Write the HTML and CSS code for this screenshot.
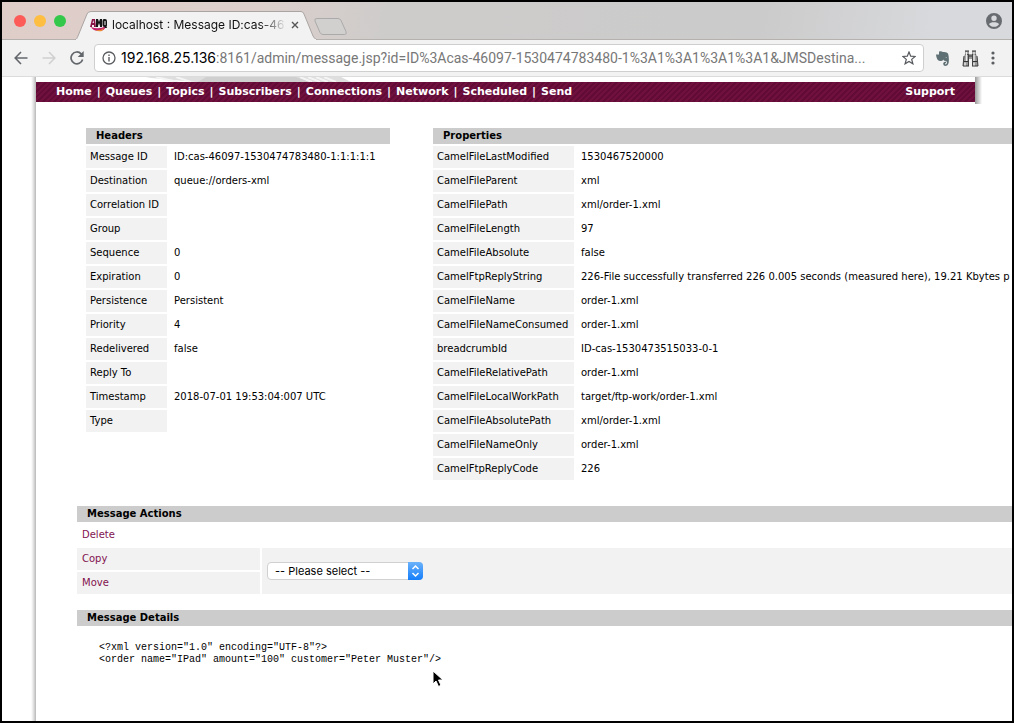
FILE: index.html
```html
<!DOCTYPE html>
<html lang="en">
<head>
<meta charset="utf-8">
<title>localhost : Message ID:cas-46097-1530474783480-1:1:1:1:1</title>
<link rel="stylesheet" href="styles.css">
</head>
<body>
<div class="window">
  <div class="tabstrip">
    <div class="lights">
      <button class="light light-close" aria-label="Close"></button>
      <button class="light light-min" aria-label="Minimize"></button>
      <button class="light light-max" aria-label="Zoom"></button>
    </div>
    <div class="tab">
      <svg class="tab-shape" width="242" height="29" viewBox="0 0 242 29" aria-hidden="true"><path d="M0 29 C2 28 2 27 3 25 L12 3 Q13 .5 16 .5 H226 Q228 .5 229 3 L238 25 Q239.500 28 242 29Z" fill="#f2f2f2" stroke="#aaa5a3"/><path d="M1 29H241" stroke="#f2f2f2" stroke-width="2"/></svg>
      <svg class="favicon" width="18" height="14" viewBox="0 0 18 14" role="img" aria-label="AMQ"><path d="M1 9 Q9 12 16 8 Q15 13 9 13 Q3 13 1 9Z" fill="#c3226b"/><path d="M5 12Q10 13 14 10L12 13Q8 14 5 12Z" fill="#ec8b32"/><path d="M0 9L2 1H5L6 9H4V7H2V9ZM2.500 5H4L3.300 2Z" fill="#8b1447"/><path d="M6 9V1H8L9 4L10 1H12V9H10V5L9 8L8 5V9Z" fill="#171717"/><path d="M14 1h1q2 0 2 2v4q0 1-.5 1.500L17 10h-2l-.5-1Q12.500 9 12.500 7V3Q12.500 1 14 1Zm.5 2v4h1V3Z" fill="#171717" fill-rule="evenodd"/></svg>
      <span class="tab-title">localhost : Message ID:cas-46</span>
      <button class="tab-close" aria-label="Close tab"><svg width="8" height="8" viewBox="0 0 8 8"><path d="M1 1L7 7M7 1L1 7" stroke="#555" stroke-width="1.400"/></svg></button>
    </div>
    <button class="new-tab" aria-label="New tab"><svg width="34" height="17" viewBox="0 0 34 17"><path d="M3 .5H24Q26 .5 27 2.500L32 13.500Q33 16.500 30.500 16.500H9Q7 16.500 6 14.500L1 3Q0 .5 3 .5Z" fill="#d2d0cf" stroke="#aaa"/></svg></button>
    <button class="profile" aria-label="Profile"><svg width="16" height="16" viewBox="0 0 16 16"><path fill-rule="evenodd" d="M8 0a8 8 0 1 0 0 16A8 8 0 0 0 8 0Zm0 2.600a2.700 2.700 0 1 1 0 5.400 2.700 2.700 0 0 1 0-5.400ZM3 11.200C4.200 8.700 11.800 8.700 13 11.200 11 14.600 5 14.600 3 11.200Z" fill="#686c71"/></svg></button>
  </div>
  <div class="toolbar">
    <button class="tool" aria-label="Back"><svg width="14" height="14" viewBox="0 0 14 14"><path d="M13.500 7H1.500M7 1L1.200 7L7 13" fill="none" stroke="#63676c" stroke-width="1.600"/></svg></button>
    <button class="tool" aria-label="Forward"><svg width="14" height="14" viewBox="0 0 14 14"><path d="M.5 7H12.500M7 1L12.800 7L7 13" fill="none" stroke="#d0d0d0" stroke-width="1.600"/></svg></button>
    <button class="tool" aria-label="Reload"><svg width="14" height="14" viewBox="0 0 14 14"><path d="M12.600 8.500A5.900 5.900 0 1 1 11.200 2.800L12.500 4.200" fill="none" stroke="#63676c" stroke-width="1.700"/><path d="M13.700 0V6H7.700Z" fill="#63676c"/></svg></button>
    <div class="omnibox">
      <svg class="info" width="14" height="14" viewBox="0 0 14 14" aria-hidden="true"><circle cx="7" cy="7" r="6" fill="none" stroke="#5a5d61" stroke-width="1.300"/><path d="M7 6V10.500M7 3.400V5" stroke="#5a5d61" stroke-width="1.400"/></svg>
      <label class="host" for="url">192.168.25.136</label>
      <input class="url" id="url" type="text" value=":8161/admin/message.jsp?id=ID%3Acas-46097-1530474783480-1%3A1%3A1%3A1%3A1&amp;JMSDestina...">
      <button class="star" aria-label="Bookmark"><svg width="14" height="14" viewBox="0 0 14 14"><path d="M7 1L8.700 5.200L13.200 5.500L9.700 8.400L10.900 12.800L7 10.400L3.100 12.800L4.300 8.400L.8 5.500L5.300 5.200Z" fill="none" stroke="#55585c" stroke-width="1.200"/></svg></button>
    </div>
    <button class="ext" aria-label="Evernote"><svg width="14" height="15" viewBox="0 0 14 15"><path d="M0 3.500H3V.5Q5 -.3 7 1Q11 .6 12 2.500Q13.300 6 12.700 11.500Q12 15 9 15Q6.800 14.500 7.300 12Q8 10.500 10 10.800V12.200H9V13.500Q11 13.500 11 11.500Q11 9.500 8 9.800L7.300 8.500Q6.500 10.500 4 10Q.5 9.500 0 3.500ZM9.200 6.300Q10.500 5.300 11 6.800Z" fill="#5f7074" fill-rule="evenodd"/></svg></button>
    <button class="ext" aria-label="Binoculars"><svg width="17" height="17" viewBox="0 0 17 17"><path d="M3 1H7V4H10V1H14V4L16 9V16H10V9H7V16H1V9L3 4Z" fill="#999"/><path d="M3 1H7M10 1H14M3.500 4.500H7M10 4.500H13.500M1 11.500H7M10 11.500H16M1 16H7M10 16H16M7 6H10" stroke="#333" fill="none"/><path d="M4.500 2V11M12 2V11M3 12.500V15.500M12 12.500V15.500" stroke="#eee" stroke-width="1.300"/><path d="M6.500 4V16M2 6L1 16M10.500 4V16M15 6L16 16" stroke="#444" fill="none"/></svg></button>
    <button class="menu" aria-label="Menu"><svg width="4" height="14" viewBox="0 0 4 14"><circle cx="2" cy="2" r="1.600" fill="#5a5d61"/><circle cx="2" cy="7" r="1.600" fill="#5a5d61"/><circle cx="2" cy="12" r="1.600" fill="#5a5d61"/></svg></button>
  </div>
  <div class="page">
    <div class="edge"></div>
    <div class="content">
      <header class="site-header">
        <div class="site-top">
          <svg class="swoosh" width="210" height="5" viewBox="0 0 210 5" aria-hidden="true"><path d="M0 0H195L205 5H50L5 1Z" fill="#dedede"/><path d="M60 0H150L165 5H52Z" fill="#cfcfcf"/><path d="M154 0L166 5M162 0L174 5M170 0L182 5M178 0L190 5M10 0L32 5M30 0L45 5" stroke="#f4f4f4" stroke-width="2"/></svg>
          <nav class="nav">
            <div class="nav-links">
              <a href="#">Home</a><span>|</span><a href="#">Queues</a><span>|</span><a href="#">Topics</a><span>|</span><a href="#">Subscribers</a><span>|</span><a href="#">Connections</a><span>|</span><a href="#">Network</a><span>|</span><a href="#">Scheduled</a><span>|</span><a href="#">Send</a>
            </div>
            <a href="#">Support</a>
          </nav>
        </div>
        <div class="shade"></div>
      </header>
      <main class="main">
        <div class="columns">
          <table class="grid headers">
            <thead><tr><th class="title" colspan="2">Headers</th></tr></thead>
            <tbody>
              <tr><th class="label">Message ID</th><td>ID:cas-46097-1530474783480-1:1:1:1:1</td></tr>
              <tr><th class="label">Destination</th><td>queue://orders-xml</td></tr>
              <tr><th class="label">Correlation ID</th><td></td></tr>
              <tr><th class="label">Group</th><td></td></tr>
              <tr><th class="label">Sequence</th><td>0</td></tr>
              <tr><th class="label">Expiration</th><td>0</td></tr>
              <tr><th class="label">Persistence</th><td>Persistent</td></tr>
              <tr><th class="label">Priority</th><td>4</td></tr>
              <tr><th class="label">Redelivered</th><td>false</td></tr>
              <tr><th class="label">Reply To</th><td></td></tr>
              <tr><th class="label">Timestamp</th><td>2018-07-01 19:53:04:007 UTC</td></tr>
              <tr><th class="label">Type</th><td></td></tr>
            </tbody>
          </table>
          <table class="grid properties">
            <thead><tr><th class="title" colspan="2">Properties</th></tr></thead>
            <tbody>
              <tr><th class="label">CamelFileLastModified</th><td>1530467520000</td></tr>
              <tr><th class="label">CamelFileParent</th><td>xml</td></tr>
              <tr><th class="label">CamelFilePath</th><td>xml/order-1.xml</td></tr>
              <tr><th class="label">CamelFileLength</th><td>97</td></tr>
              <tr><th class="label">CamelFileAbsolute</th><td>false</td></tr>
              <tr><th class="label">CamelFtpReplyString</th><td>226-File successfully transferred 226 0.005 seconds (measured here), 19.21 Kbytes p</td></tr>
              <tr><th class="label">CamelFileName</th><td>order-1.xml</td></tr>
              <tr><th class="label">CamelFileNameConsumed</th><td>order-1.xml</td></tr>
              <tr><th class="label">breadcrumbId</th><td>ID-cas-1530473515033-0-1</td></tr>
              <tr><th class="label">CamelFileRelativePath</th><td>order-1.xml</td></tr>
              <tr><th class="label">CamelFileLocalWorkPath</th><td>target/ftp-work/order-1.xml</td></tr>
              <tr><th class="label">CamelFileAbsolutePath</th><td>xml/order-1.xml</td></tr>
              <tr><th class="label">CamelFileNameOnly</th><td>order-1.xml</td></tr>
              <tr><th class="label">CamelFtpReplyCode</th><td>226</td></tr>
            </tbody>
          </table>
        </div>
        <table class="grid wide actions">
          <thead><tr><th class="title" colspan="2">Message Actions</th></tr></thead>
          <tbody>
            <tr><td colspan="2"><a href="#">Delete</a></td></tr>
            <tr><td class="shaded action"><a href="#">Copy</a></td><td class="shaded" rowspan="2">
              <div class="picker">
                <select class="select" aria-label="Destination queue"><option>-- Please select --</option></select>
                <svg class="arrows" width="15" height="18" viewBox="0 0 15 18" aria-hidden="true"><defs><linearGradient id="blue" x2="0" y2="1"><stop stop-color="#6bb2fa"/><stop offset="1" stop-color="#157efb"/></linearGradient></defs><path d="M0 0H11Q15 0 15 4V14Q15 18 11 18H0Z" fill="url(#blue)"/><path d="M4.500 7L7.500 4L10.500 7M4.500 11L7.500 14L10.500 11" fill="none" stroke="#fff" stroke-width="1.500"/></svg>
              </div>
            </td></tr>
            <tr><td class="shaded action"><a href="#">Move</a></td></tr>
          </tbody>
        </table>
        <section class="details">
          <h2 class="title">Message Details</h2>
          <pre class="body-text">&lt;?xml version="1.0" encoding="UTF-8"?&gt;
&lt;order name="IPad" amount="100" customer="Peter Muster"/&gt;</pre>
        </section>
      </main>
    </div>
  </div>
  <svg class="pointer" width="12" height="18" viewBox="0 0 12 18" aria-hidden="true"><path d="M1 1V14L4 11L6.500 16.500L9 15.300L6.500 10H11Z" fill="#000" stroke="#fff"/></svg>
</div>
</body>
</html>
```
FILE: styles.css
```css
* { box-sizing: border-box; }

body {
  margin: 0;
  background: #fff;
  color: #000;
  font: 10px/14px Verdana, "DejaVu Sans", sans-serif;
}

button {
  display: flex;
  padding: 0;
  border: 0;
  background: none;
}

.window {
  position: relative;
  display: flex;
  flex-direction: column;
  min-height: 100vh;
  border: 2px solid #000;
  overflow: hidden;
}

/* Browser chrome */
.tabstrip {
  display: flex;
  align-items: flex-end;
  height: 38px;
  padding-left: 12px;
  background: linear-gradient(100deg, #dfcdc8 0, #dccfcb 25%, #cecccb 38%, #cbcbcb 75%, #d8d9dc 92%);
  border-bottom: 1px solid #b5b1af;
}

.lights {
  display: flex;
  align-self: center;
  gap: 8px;
}

.light {
  width: 12px;
  height: 12px;
  border-radius: 50%;
}

.light-close { background: #fc5b57; }
.light-min { background: #fdbe41; }
.light-max { background: #34c84a; }

.tab {
  position: relative;
  display: flex;
  align-items: center;
  width: 242px;
  height: 29px;
  margin-left: 9px;
  margin-bottom: -1px;
  padding: 0 18px 2px 15px;
}

.tab-shape {
  position: absolute;
  left: 0;
  top: 0;
}

.favicon { position: relative; }

.tab-title {
  position: relative;
  flex: 1;
  margin: 0 4px;
  white-space: nowrap;
  font: 12px/20px Inter, sans-serif;
  color: #111;
  mask-image: linear-gradient(to right, #000 84%, transparent);
}

.tab-close {
  position: relative;
}

.new-tab { margin: 0 0 4px -3px; }

.profile {
  align-self: center;
  margin: 0 10px 0 auto;
}

.toolbar {
  display: flex;
  align-items: center;
  height: 37px;
  padding: 0 17px 0 12px;
  background: #f2f2f2;
  border-bottom: 1px solid #dcdcdc;
}

.tool { margin-right: 14px; }

.omnibox {
  display: flex;
  flex: 1;
  align-items: center;
  min-width: 0;
  height: 28px;
  margin: 0 12px 0 -4px;
  padding: 0 7px;
  background: #fff;
  border: 1px solid #cfcfcf;
  border-radius: 4px;
}

.host {
  margin-left: 5px;
  font: 14px/20px Inter, sans-serif;
  color: #000;
}

.url {
  flex: 1;
  min-width: 0;
  padding: 0;
  border: 0;
  outline: 0;
  background: none;
  font: 14px/20px Roboto, sans-serif;
  color: #777;
}

.ext { margin-right: 12px; }

/* Page */
.page {
  display: flex;
  flex: 1;
}

.edge {
  flex: none;
  width: 34px;
  background: linear-gradient(to right, #fff 29px, #e8e8e8 31px, #b8b8b8 34px);
}

.content {
  flex: 1;
  min-width: 0;
}

.site-header {
  display: flex;
  margin-right: 30px;
}

.site-top { flex: 1; }

.swoosh {
  display: block;
  margin-left: 110px;
}

.shade {
  width: 7px;
  height: 27px;
  background: linear-gradient(to right, #999, #fff);
}

.nav {
  display: flex;
  justify-content: space-between;
  padding: 3px 20px;
  background: repeating-linear-gradient(135deg, #6f103f 0, #6f103f 2px, #620b36 2px, #620b36 4px);
  color: #fff;
  font-size: 11px;
  font-weight: bold;
}

.nav-links {
  display: flex;
  gap: 5px;
}

.nav a {
  color: #fff;
  text-decoration: none;
}

.main {
  padding: 22px 0 0 39px;
}

.columns {
  display: flex;
  align-items: flex-start;
  gap: 39px;
  padding-left: 9px;
}

.grid {
  border-spacing: 2px;
  white-space: nowrap;
}

.headers { width: 308px; flex: none; }
.properties { flex: 1 0 auto; margin-right: -2px; }

.grid td, .label {
  height: 22px;
  padding: 4px;
}

.headers td, .properties td { padding-left: 5px; }
.headers .label { width: 81px; }
.properties .label { width: 141px; }

.label {
  background: #f2f2f2;
  font-weight: normal;
  text-align: left;
}

.title {
  height: 16px;
  margin: 0;
  padding: 1px 10px;
  background: #ccc;
  font-size: 10px;
  line-height: 14px;
  font-weight: bold;
  text-align: left;
}

.wide {
  width: calc(100% + 2px);
  margin-top: 22px;
}

.grid .shaded { background: #f2f2f2; }
.grid .action { width: 183px; }
.actions td { padding-left: 5px; }

.actions a {
  color: #83134f;
  text-decoration: none;
}

.picker {
  position: relative;
  display: flex;
  width: 156px;
}

.select {
  appearance: none;
  width: 100%;
  height: 18px;
  padding: 0 16px 0 7px;
  border: 1px solid #d0d0d0;
  border-radius: 4px;
  background: #fff;
  color: #000;
  font: 11px/16px Inter, sans-serif;
}

.arrows {
  position: absolute;
  right: 0;
  top: 0;
}

.details { margin: 14px 0 0 2px; }

.body-text {
  margin: 16px 22px;
  font: 10px/12px "Courier New", "Liberation Mono", monospace;
}

.pointer {
  position: absolute;
  left: 430px;
  top: 668px;
}
```
